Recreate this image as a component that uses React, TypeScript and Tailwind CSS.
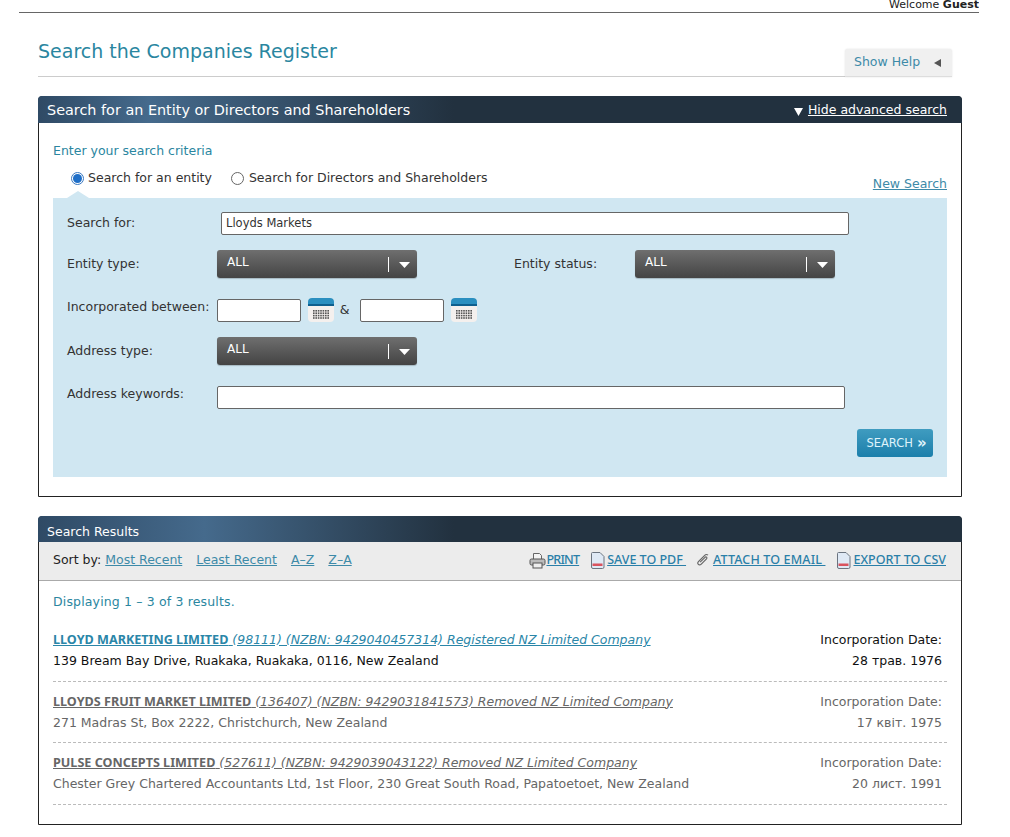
const font = "font-['DejaVu_Sans',Verdana,sans-serif]";

function Calendar() {
  return (
    <svg width="28" height="26" viewBox="0 0 28 26" className="shrink-0">
      <rect x="1" y="1" width="26" height="24" rx="4" fill="#f4f0ee" />
      <path d="M1 9V5a4 4 0 0 1 4-4h18a4 4 0 0 1 4 4v4z" fill="#2a8fc0" />
      <rect x="1" y="7" width="26" height="2" fill="#0e5f8e" />
      {[0, 1, 2, 3].map((r) =>
        [0, 1, 2, 3, 4, 5, 6].map((c) => (
          <rect key={`${r}-${c}`} x={6 + c * 2.4} y={13 + r * 2.4} width="1.6" height="1.6" fill="#555" />
        ))
      )}
    </svg>
  );
}

function Select({ width = 'w-[200px]' }: { width?: string }) {
  return (
    <div className={`${width} h-[28px] rounded-[3px] bg-gradient-to-b from-[#6f6f6f] to-[#444444] flex items-start justify-between text-white text-[12px] pl-[10px] shrink-0 shadow-[0_1px_1px_rgba(0,0,0,0.2)]`}>
      <span className="mt-[3px]">ALL</span>
      <div className="flex items-center mt-[7px] mr-[7px]">
        <span className="w-px h-[15px] bg-white mr-[10px]"></span>
        <svg width="11" height="6" viewBox="0 0 11 6"><path d="M0 0h11L5.500 6z" fill="#fff" /></svg>
      </div>
    </div>
  );
}

function DocIcon() {
  return (
    <svg width="15" height="17" viewBox="0 0 15 17" className="shrink-0">
      <path d="M1.500 1.500a1 1 0 0 1 1-1H10l4 4v10.500a1.500 1.500 0 0 1-1.500 1.500h-9.500a1.500 1.500 0 0 1-1.500-1.500z" fill="#dfe9f5" stroke="#6b7480" />
      <rect x="2.500" y="11.500" width="10" height="2.500" fill="#d9535f" />
    </svg>
  );
}

function PrintIcon() {
  return (
    <svg width="17" height="17" viewBox="0 0 17 17" className="shrink-0">
      <path d="M4.500 7V1.500h6l2 2V7" fill="#f3f3f3" stroke="#666" />
      <rect x="1" y="7" width="15" height="6" rx="1.500" fill="#bbb" stroke="#555" />
      <rect x="4" y="11" width="9" height="5" fill="#eee" stroke="#555" />
    </svg>
  );
}

function ClipIcon() {
  return (
    <svg width="14" height="14" viewBox="0 0 14 14" className="shrink-0">
      <path d="M12 2.200c-1-1-2.300-.9-3.300.1L2.400 8.600c-.8.800-.9 2-.1 2.800s1.900.7 2.700-.1l5.500-5.500c.5-.5.500-1.200.1-1.600s-1.100-.4-1.600.1L4.100 9.200" fill="none" stroke="#666" strokeWidth="1.200" />
    </svg>
  );
}

function Result({ name, meta, address, date, active }: { name: string; meta: string; address: string; date: string; active?: boolean }) {
  const tone = active ? 'text-[#111]' : 'text-[#666]';
  return (
    <div className="h-[61.5px] border-b border-dashed border-[#bbb] flex justify-between pr-[5px] pt-[11px] text-[12.500px]">
      <div>
        <div className={`leading-[18px] underline whitespace-nowrap ${active ? 'text-[#2a86a8]' : 'text-[#666]'}`}>
          <span className="font-['Noto_Sans',sans-serif] font-bold text-[12.600px]">{name}</span>{' '}
          <span className="italic">{meta}</span>
        </div>
        <div className={`mt-[3px] leading-[18px] whitespace-nowrap ${tone}`}>{address}</div>
      </div>
      <div className={`text-right ${tone}`}>
        <div className="leading-[18px]">Incorporation Date:</div>
        <div className="mt-[3px] leading-[18px]">{date}</div>
      </div>
    </div>
  );
}

export default function App() {
  return (
    <div className={`${font} w-[1010px] h-[837px] overflow-hidden bg-white text-[12.500px] text-[#333]`}>
      <div className="ml-[19px] w-[960px] h-[13px] border-b border-[#666] flex justify-end items-end overflow-hidden">
        <span className="text-[11px] leading-[13px] text-[#222] -translate-y-[1px]">Welcome <b className="font-semibold">Guest</b></span>
      </div>

      <div className="ml-[38px] w-[924px]">
        {/* Title */}
        <div className="w-[914px] h-[64px] flex items-end justify-between">
          <div className="flex-1 h-[64px] border-b border-[#ccc] pt-[25px]">
            <h1 className="text-[19px] leading-[26px] text-[#2a86a0] font-normal">Search the Companies Register</h1>
          </div>
          <div className="w-[107px] h-[28px] bg-[#f0f0f0] border-b border-[#ddd] rounded-t-[3px] shadow-[0_0_2px_rgba(0,0,0,0.12)] flex items-center justify-between pl-[9px] pr-[10px] text-[#3d8aa8]">
            <span>Show Help</span>
            <svg width="8" height="8" viewBox="0 0 8 8"><path d="M7 0v8L0 4z" fill="#555" /></svg>
          </div>
        </div>

        {/* Search panel */}
        <div className="mt-[19px] h-[401px] border border-[#222] rounded-t-[4px]">
          <div className="-mx-px -mt-px h-[27px] pt-[2px] rounded-t-[4px] bg-[linear-gradient(90deg,#2f4a65_0%,#456a8c_12%,#22313f_45%,#22313f_100%)] flex items-center justify-between pl-[9px] pr-[15px] text-white">
            <span className="text-[14.400px]">Search for an Entity or Directors and Shareholders</span>
            <span className="flex items-center gap-[5px]">
              <svg width="9" height="8" viewBox="0 0 9 8" className="mt-[3px]"><path d="M0 0h9L4.500 8z" fill="#fff" /></svg>
              <span className="underline">Hide advanced search</span>
            </span>
          </div>

          <div className="px-[14px]">
            <div className="pt-[20px] leading-[16px] text-[#2a86a0]">Enter your search criteria</div>
            <div className="flex items-end justify-between h-[39px]">
              <div className="flex items-center h-[26px] mb-[7px] pl-[18px] text-[#333]">
                <span className="w-[13px] h-[13px] rounded-full border border-[#3a78c0] flex items-center justify-center mr-[4px]">
                  <span className="w-[9px] h-[9px] rounded-full bg-[#1f6fc8]"></span>
                </span>
                <span>Search for an entity</span>
                <span className="w-[13px] h-[13px] rounded-full border border-[#666] bg-white ml-[19px] mr-[5px]"></span>
                <span>Search for Directors and Shareholders</span>
              </div>
              <span className="underline text-[#3d8aa8] pb-[4px]">New Search</span>
            </div>

            {/* Form */}
            <div className="relative h-[279px] bg-[#d0e7f2] pl-[14px] pt-[14px]">
              <svg width="22" height="7" viewBox="0 0 22 7" className="absolute left-[14px] -top-[7px]"><path d="M0 7L11 0l11 7z" fill="#d0e7f2" /></svg>
              <div className="flex items-center h-[23px]">
                <span className="w-[154px]">Search for:</span>
                <div className="w-[628px] h-[23px] bg-white border border-[#666] rounded-[2px] pl-[4px] text-[11.500px] leading-[21px] text-[#333]">Lloyds Markets</div>
              </div>
              <div className="flex items-center h-[28px] mt-[15px]">
                <span className="w-[150px]">Entity type:</span>
                <Select />
                <span className="ml-[97px] w-[121px]">Entity status:</span>
                <Select />
              </div>
              <div className="flex items-center h-[26px] mt-[19px]">
                <span className="w-[150px] whitespace-nowrap mb-[6px]">Incorporated between:</span>
                <div className="w-[84px] h-[23px] bg-white border border-[#666] rounded-[2px]"></div>
                <div className="ml-[6px]"><Calendar /></div>
                <span className="w-[25px] text-center pr-[6px]">&amp;</span>
                <div className="w-[84px] h-[23px] bg-white border border-[#666] rounded-[2px]"></div>
                <div className="ml-[6px]"><Calendar /></div>
              </div>
              <div className="flex items-center h-[28px] mt-[14px]">
                <span className="w-[150px]">Address type:</span>
                <Select />
              </div>
              <div className="flex items-center h-[23px] mt-[21px]">
                <span className="w-[150px] mb-[6px]">Address keywords:</span>
                <div className="w-[628px] h-[23px] bg-white border border-[#666] rounded-[2px]"></div>
              </div>
              <div className="flex justify-end pr-[14px] mt-[20px]">
                <button className="w-[76px] h-[28px] pl-[3px] pt-[1px] rounded-[3px] bg-gradient-to-b from-[#3f9cc0] to-[#1a7fab] text-[#dff3fb] text-[11.500px] flex items-center justify-center gap-[4px]">
                  SEARCH <span className="text-[15px] leading-[15px] font-bold">»</span>
                </button>
              </div>
            </div>
          </div>
        </div>

        {/* Results panel */}
        <div className="mt-[19px] h-[309px] border border-[#222] rounded-t-[4px]">
          <div className="-mx-px -mt-px h-[26px] pt-[6px] rounded-t-[4px] bg-[linear-gradient(90deg,#2f4a65_0%,#456a8c_18%,#22313f_45%,#22313f_100%)] flex items-center pl-[9px] text-white">
            Search Results
          </div>
          <div className="h-[39px] pb-[2px] bg-[#ececec] border-b border-[#aaa] flex items-center justify-between pl-[14px] pr-[15px]">
            <div className="flex items-center whitespace-nowrap">
              <span className="text-[#222] mr-[4px]">Sort by:</span>
              <div className="flex gap-[14px] underline text-[#3d8aa8]">
                <span>Most Recent</span>
                <span>Least Recent</span>
                <span>A–Z</span>
                <span>Z–A</span>
              </div>
            </div>
            <div className="flex items-center whitespace-nowrap font-['Noto_Sans',sans-serif] font-medium text-[12.500px] text-[#2a7fa8] underline">
              <PrintIcon /><span className="mr-[11px] tracking-[-0.8px]">PRINT</span>
              <DocIcon /><span className="ml-[2px] mr-[10px]">SAVE TO PDF&nbsp;</span>
              <ClipIcon /><span className="ml-[3px] mr-[11px] tracking-[0.15px]">ATTACH TO EMAIL&nbsp;</span>
              <DocIcon /><span className="ml-[2px]">EXPORT TO CSV</span>
            </div>
          </div>
          <div className="px-[14px]">
            <div className="pt-[13px] leading-[16px] tracking-[0.15px] text-[#2a86a0]">Displaying 1 – 3 of 3 results.</div>
            <div className="mt-[10px]">
              <Result active name="LLOYD MARKETING LIMITED" meta="(98111) (NZBN: 9429040457314) Registered NZ Limited Company" address="139 Bream Bay Drive, Ruakaka, Ruakaka, 0116, New Zealand" date="28 трав. 1976" />
              <Result name="LLOYDS FRUIT MARKET LIMITED" meta="(136407) (NZBN: 9429031841573) Removed NZ Limited Company" address="271 Madras St, Box 2222, Christchurch, New Zealand" date="17 квіт. 1975" />
              <Result name="PULSE CONCEPTS LIMITED" meta="(527611) (NZBN: 9429039043122) Removed NZ Limited Company" address="Chester Grey Chartered Accountants Ltd, 1st Floor, 230 Great South Road, Papatoetoet, New Zealand" date="20 лист. 1991" />
            </div>
          </div>
        </div>
      </div>
    </div>
  );
}
